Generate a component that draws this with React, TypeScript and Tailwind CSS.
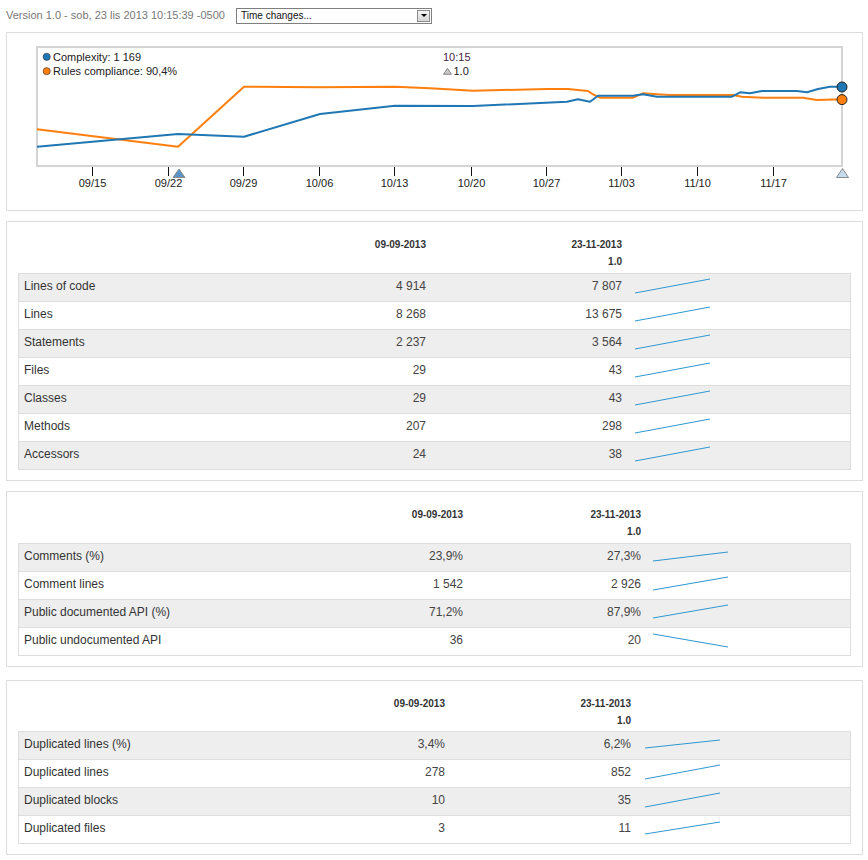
type Row = { label: string; a: string; b: string; s: [number, number] }

const sizeRows: Row[] = [
  { label: "Lines of code", a: "4 914", b: "7 807", s: [19, 5] },
  { label: "Lines", a: "8 268", b: "13 675", s: [19, 5] },
  { label: "Statements", a: "2 237", b: "3 564", s: [19, 5] },
  { label: "Files", a: "29", b: "43", s: [19, 5] },
  { label: "Classes", a: "29", b: "43", s: [19, 5] },
  { label: "Methods", a: "207", b: "298", s: [19, 5] },
  { label: "Accessors", a: "24", b: "38", s: [19, 5] },
]

const commentRows: Row[] = [
  { label: "Comments (%)", a: "23,9%", b: "27,3%", s: [17, 8] },
  { label: "Comment lines", a: "1 542", b: "2 926", s: [18, 5] },
  { label: "Public documented API (%)", a: "71,2%", b: "87,9%", s: [18, 5] },
  { label: "Public undocumented API", a: "36", b: "20", s: [6, 19] },
]

const dupRows: Row[] = [
  { label: "Duplicated lines (%)", a: "3,4%", b: "6,2%", s: [16, 8] },
  { label: "Duplicated lines", a: "278", b: "852", s: [19, 5] },
  { label: "Duplicated blocks", a: "10", b: "35", s: [19, 5] },
  { label: "Duplicated files", a: "3", b: "11", s: [18, 6] },
]

const blue = "#1f77b4"
const orange = "#ff7f0e"

const bluePts =
  "37,146.7 178,134 244,136.7 320,114 395,105.7 473,106 567,101.7 578,99.3 590,101.7 598,95.7 633,95.7 643,94.3 657,96.7 732,96.7 740,92.3 750,93.3 762,91 797,91 807,92.3 818,89 830,86.7 842,86.7"
const orangePts =
  "37,129.3 178,146.7 244,86.7 320,87.3 395,86.7 430,88.3 473,90.7 547,89 568,89 588,91 593,94.3 600,97.7 633,97.7 643,93.3 657,94.3 670,95 733,95 742,96.7 763,97.7 803,97.7 817,100 842,99.3"

const ticks = [
  { x: 92, t: "09/15" },
  { x: 168, t: "09/22" },
  { x: 243, t: "09/29" },
  { x: 319, t: "10/06" },
  { x: 394, t: "10/13" },
  { x: 471, t: "10/20" },
  { x: 546, t: "10/27" },
  { x: 621, t: "11/03" },
  { x: 697, t: "11/10" },
  { x: 773, t: "11/17" },
]

function Chart() {
  return (
    <svg width="855" height="177" className="block">
      <g transform="translate(-7,-33)" fontFamily="'Liberation Sans', Arial, sans-serif">
        <rect x="37" y="47" width="805" height="119" fill="white" stroke="#d4d4d4" strokeWidth="2" />
        {/* legend */}
        <circle cx="46.7" cy="56.8" r="3.6" fill={blue} stroke="#333" strokeWidth="0.6" />
        <text x="53" y="60.8" fontSize="11" fill="#222">Complexity: 1 169</text>
        <circle cx="46.7" cy="71.2" r="3.6" fill={orange} stroke="#333" strokeWidth="0.6" />
        <text x="53" y="75.2" fontSize="11" fill="#222">Rules compliance: 90,4%</text>
        <text x="443" y="60.8" fontSize="11" fill="#4a1f4a">10:15</text>
        <polygon points="443.5,74.3 447.5,68.3 451.5,74.3" fill="#c8c8c8" stroke="#888" strokeWidth="1" />
        <text x="453.5" y="75.2" fontSize="11" fill="#222">1.0</text>
        {/* series */}
        <polyline points={orangePts} fill="none" stroke={orange} strokeWidth="2" strokeLinejoin="round" />
        <polyline points={bluePts} fill="none" stroke={blue} strokeWidth="2" strokeLinejoin="round" />
        <circle cx="842" cy="87" r="5" fill={blue} stroke="#222" strokeWidth="1" />
        <circle cx="842" cy="99.6" r="5" fill={orange} stroke="#222" strokeWidth="1" />
        {/* axis */}
        {ticks.map((k) => (
          <g key={k.t}>
            <line x1={k.x + 0.5} y1="167" x2={k.x + 0.5} y2="176" stroke="#111" strokeWidth="1" />
            <text x={k.x + 0.5} y="187" fontSize="11" fill="#222" textAnchor="middle">{k.t}</text>
          </g>
        ))}
        <polygon points="173,177.5 179,169 185,177.5" fill="#5b93c4" stroke="#8a8a8a" strokeWidth="1" />
        <polygon points="836.5,177.5 842.5,168.5 848.5,177.5" fill="#c6dcec" stroke="#8a8a8a" strokeWidth="1" />
      </g>
    </svg>
  )
}

function Spark({ s }: { s: [number, number] }) {
  return (
    <svg width="76" height="28" className="block">
      <line x1="0" y1={s[0]} x2="75" y2={s[1]} stroke="#2f97d0" strokeWidth="1" />
    </svg>
  )
}

function Section({ rows, grid, sparkMl, headH, className }: { rows: Row[]; grid: string; sparkMl: string; headH: string; className: string }) {
  return (
    <div className={"ml-[6px] w-[857px] border border-[#dddddd] bg-white px-[11px] pb-[10px] " + className}>
      <div className={"grid border-x border-transparent pt-[14px] text-[10px] leading-[17px] font-bold text-[#333] " + grid + " " + headH}>
        <div />
        <div className="pr-[5px] text-right">09-09-2013</div>
        <div className="pr-[5px] text-right">
          <div>23-11-2013</div>
          <div>1.0</div>
        </div>
        <div />
      </div>
      <div className="border-x border-b border-[#dddddd]">
        {rows.map((r, i) => (
          <div
            key={r.label}
            className={"grid h-[28px] items-center border-t border-[#dddddd] text-[12px] leading-[14px] text-[#444] " + grid + (i % 2 === 0 ? " bg-[#eeeeee]" : " bg-white")}
          >
            <div className="pb-[4px] pl-[5px] text-[#333]">{r.label}</div>
            <div className="pb-[4px] pr-[5px] text-right">{r.a}</div>
            <div className="pb-[4px] pr-[5px] text-right">{r.b}</div>
            <div className={sparkMl}>
              <Spark s={r.s} />
            </div>
          </div>
        ))}
      </div>
    </div>
  )
}

export default function App() {
  return (
    <div className="min-h-screen w-[868px] bg-white font-['Liberation_Sans',Arial,sans-serif]">
      <div className="flex h-[31px] items-center">
        <div className="w-[236px] shrink-0 whitespace-nowrap pl-[6px] text-[11px] text-[#777]">Version 1.0 - sob, 23 lis 2013 10:15:39 -0500</div>
        <div className="flex h-[16px] w-[196px] shrink-0 items-center justify-between border border-[#7f7f7f] bg-white pl-[4px] pr-[1px]">
          <span className="text-[10px] text-[#111]">Time changes...</span>
          <div className="flex h-[12px] w-[13px] items-center justify-center border border-[#8c8c8c] bg-gradient-to-b from-[#f4f4f4] to-[#d6d6d6]">
            <div className="h-0 w-0 border-x-[3px] border-t-[3px] border-x-transparent border-t-black" />
          </div>
        </div>
      </div>

      <div className="ml-[6px] mt-[1px] h-[179px] w-[857px] border border-[#dddddd]">
        <Chart />
      </div>

      <Section
        rows={sizeRows}
        grid="grid-cols-[249px_163px_196px_1fr]"
        sparkMl="ml-[8px]"
        headH="h-[51px]"
        className="mt-[10px]"
      />
      <Section
        rows={commentRows}
        grid="grid-cols-[249px_200px_178px_1fr]"
        sparkMl="ml-[7px]"
        headH="h-[51px]"
        className="mt-[10px]"
      />
      <Section
        rows={dupRows}
        grid="grid-cols-[249px_182px_186px_1fr]"
        sparkMl="ml-[9px]"
        headH="h-[50px]"
        className="mt-[13px]"
      />
    </div>
  )
}
